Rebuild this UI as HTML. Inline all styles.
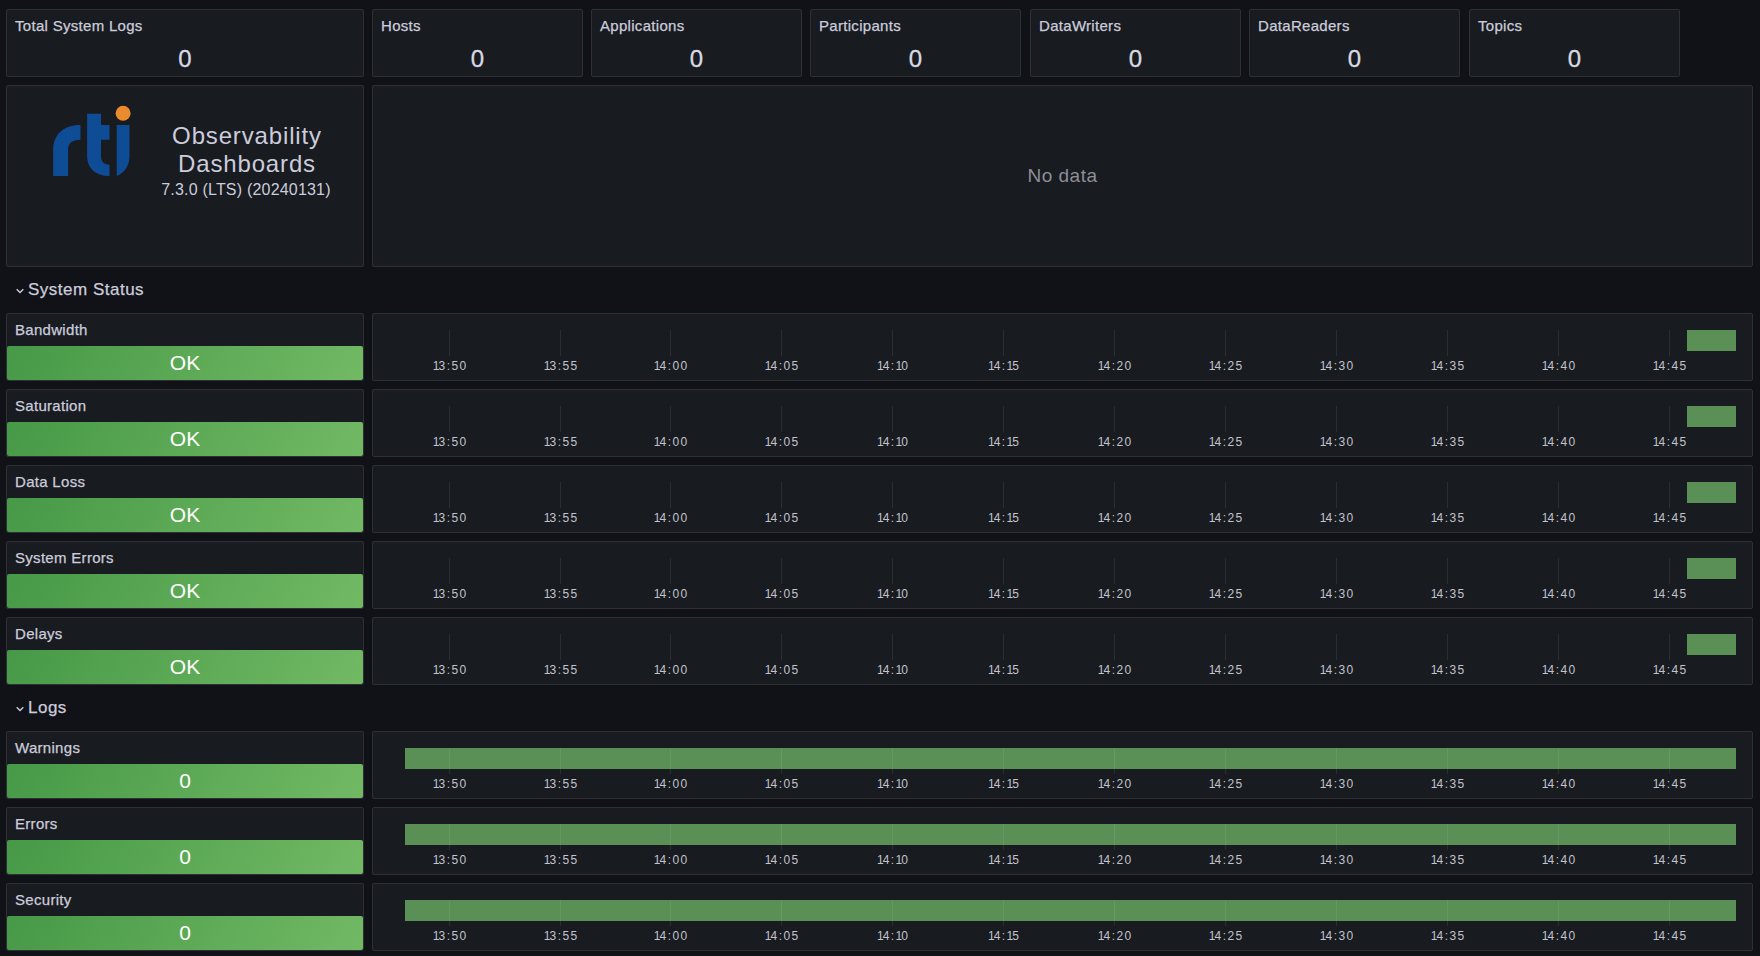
<!DOCTYPE html><html><head><meta charset="utf-8"><title>Dashboard</title><style>
*{margin:0;padding:0;box-sizing:border-box}
html,body{width:1760px;height:956px;overflow:hidden;background:#111217;font-family:"Liberation Sans",sans-serif;color:#ccccdc}
.p{position:absolute;background:#181b1f;border:1px solid #2e3036;border-radius:2px;height:68px}
.t{position:absolute;left:8px;top:8px;font-size:15px;line-height:16px;letter-spacing:0.3px;white-space:nowrap;color:#ccccdc;-webkit-text-stroke:0.25px #ccccdc}
.v{position:absolute;left:0;right:0;top:35px;text-align:center;font-size:24px;line-height:28px;color:#d8d9e3;-webkit-text-stroke:0.3px #d8d9e3}
.g{position:absolute;left:0;right:0;bottom:0;height:34px;border-radius:2px;background:linear-gradient(120deg,#469947,#72b964);color:#fff;text-align:center;font-size:21px;line-height:34px}
.rh{position:absolute;left:6px;height:30px;width:1747px}
.rh .c{position:absolute;left:10px;top:13px}
.rh .n{position:absolute;left:22px;top:6px;font-size:17px;line-height:18px;letter-spacing:0.5px;color:#ccccdc;-webkit-text-stroke:0.25px #ccccdc}
.bar{position:absolute;background:#5a9056}
.tk{position:absolute;width:1px;height:26px;top:16px;background:rgba(204,204,220,0.10)}
.lb{position:absolute;top:45px;width:60px;margin-left:-30px;text-align:center;font-size:12px;line-height:14px;letter-spacing:1.4px;color:#c3c3cd}
.lb i{font-style:normal;letter-spacing:-0.9px}
</style></head><body>
<div class="p" style="left:6px;top:9px;width:358px"><div class="t">Total System Logs</div><div class="v">0</div></div>
<div class="p" style="left:372px;top:9px;width:211px"><div class="t">Hosts</div><div class="v">0</div></div>
<div class="p" style="left:591px;top:9px;width:211px"><div class="t">Applications</div><div class="v">0</div></div>
<div class="p" style="left:810px;top:9px;width:211px"><div class="t">Participants</div><div class="v">0</div></div>
<div class="p" style="left:1030px;top:9px;width:211px"><div class="t">DataWriters</div><div class="v">0</div></div>
<div class="p" style="left:1249px;top:9px;width:211px"><div class="t">DataReaders</div><div class="v">0</div></div>
<div class="p" style="left:1469px;top:9px;width:211px"><div class="t">Topics</div><div class="v">0</div></div>
<div class="p" style="left:6px;top:85px;width:358px;height:182px">
<svg style="position:absolute;left:-1px;top:-1px" width="358" height="182" viewBox="6 85 358 182"><path fill="#0f4c96" d="M53.2,176 L53.2,150 C53.2,135 63,125 80.5,125 L80.5,139.7 C72,139.7 68.1,143 68.1,150 L68.1,176 Z"/><path fill="#0f4c96" d="M87.1,113.8 L101,113.8 L101,125.1 L109.5,125.1 L109.5,139.7 L101,139.7 L101,156 C101,161.5 104,164.7 109.5,164.7 L109.5,176 C95,176 87.1,168 87.1,156 Z"/><path fill="#0f4c96" d="M116.7,125.1 L129.5,125.1 L129.5,156 C129.5,166 124,173 116.7,176 Z"/><circle fill="#ea8b2d" cx="123.1" cy="113.2" r="7.5"/></svg>
<div style="position:absolute;left:140px;width:200px;top:36px;text-align:center;font-size:24px;line-height:28px;letter-spacing:0.85px;color:#ccccdc">Observability<br>Dashboards</div>
<div style="position:absolute;left:139px;width:200px;top:95px;text-align:center;font-size:16px;line-height:18px;letter-spacing:0.2px;color:#ccccdc">7.3.0 (LTS) (20240131)</div>
</div>
<div class="p" style="left:372px;top:85px;width:1381px;height:182px"><div style="position:absolute;left:0;right:0;top:79px;text-align:center;font-size:19px;line-height:22px;letter-spacing:0.5px;color:#8e8e99">No data</div></div>
<div class="rh" style="top:275px"><svg class="c" width="10" height="7" viewBox="0 0 10 7"><path d="M0.7,1.3 L4,4.6 L7.3,1.3" fill="none" stroke="#ccccdc" stroke-width="1.4"/></svg><div class="n">System Status</div></div>
<div class="p" style="left:6px;top:313px;width:358px"><div class="t">Bandwidth</div><div class="g">OK</div></div>
<div class="p" style="left:372px;top:313px;width:1381px">
<div class="bar" style="left:1314px;top:16px;width:49px;height:21px"></div>
<div class="tk" style="left:76px"></div><div class="lb" style="left:77.2px"><i>1</i>3:50</div>
<div class="tk" style="left:187px"></div><div class="lb" style="left:188.2px"><i>1</i>3:55</div>
<div class="tk" style="left:297px"></div><div class="lb" style="left:298.2px"><i>1</i>4:00</div>
<div class="tk" style="left:408px"></div><div class="lb" style="left:409.2px"><i>1</i>4:05</div>
<div class="tk" style="left:519px"></div><div class="lb" style="left:520.2px"><i>1</i>4:<i>1</i>0</div>
<div class="tk" style="left:630px"></div><div class="lb" style="left:631.2px"><i>1</i>4:<i>1</i>5</div>
<div class="tk" style="left:741px"></div><div class="lb" style="left:742.2px"><i>1</i>4:20</div>
<div class="tk" style="left:852px"></div><div class="lb" style="left:853.2px"><i>1</i>4:25</div>
<div class="tk" style="left:963px"></div><div class="lb" style="left:964.2px"><i>1</i>4:30</div>
<div class="tk" style="left:1074px"></div><div class="lb" style="left:1075.2px"><i>1</i>4:35</div>
<div class="tk" style="left:1185px"></div><div class="lb" style="left:1186.2px"><i>1</i>4:40</div>
<div class="tk" style="left:1296px"></div><div class="lb" style="left:1297.2px"><i>1</i>4:45</div>
</div>
<div class="p" style="left:6px;top:389px;width:358px"><div class="t">Saturation</div><div class="g">OK</div></div>
<div class="p" style="left:372px;top:389px;width:1381px">
<div class="bar" style="left:1314px;top:16px;width:49px;height:21px"></div>
<div class="tk" style="left:76px"></div><div class="lb" style="left:77.2px"><i>1</i>3:50</div>
<div class="tk" style="left:187px"></div><div class="lb" style="left:188.2px"><i>1</i>3:55</div>
<div class="tk" style="left:297px"></div><div class="lb" style="left:298.2px"><i>1</i>4:00</div>
<div class="tk" style="left:408px"></div><div class="lb" style="left:409.2px"><i>1</i>4:05</div>
<div class="tk" style="left:519px"></div><div class="lb" style="left:520.2px"><i>1</i>4:<i>1</i>0</div>
<div class="tk" style="left:630px"></div><div class="lb" style="left:631.2px"><i>1</i>4:<i>1</i>5</div>
<div class="tk" style="left:741px"></div><div class="lb" style="left:742.2px"><i>1</i>4:20</div>
<div class="tk" style="left:852px"></div><div class="lb" style="left:853.2px"><i>1</i>4:25</div>
<div class="tk" style="left:963px"></div><div class="lb" style="left:964.2px"><i>1</i>4:30</div>
<div class="tk" style="left:1074px"></div><div class="lb" style="left:1075.2px"><i>1</i>4:35</div>
<div class="tk" style="left:1185px"></div><div class="lb" style="left:1186.2px"><i>1</i>4:40</div>
<div class="tk" style="left:1296px"></div><div class="lb" style="left:1297.2px"><i>1</i>4:45</div>
</div>
<div class="p" style="left:6px;top:465px;width:358px"><div class="t">Data Loss</div><div class="g">OK</div></div>
<div class="p" style="left:372px;top:465px;width:1381px">
<div class="bar" style="left:1314px;top:16px;width:49px;height:21px"></div>
<div class="tk" style="left:76px"></div><div class="lb" style="left:77.2px"><i>1</i>3:50</div>
<div class="tk" style="left:187px"></div><div class="lb" style="left:188.2px"><i>1</i>3:55</div>
<div class="tk" style="left:297px"></div><div class="lb" style="left:298.2px"><i>1</i>4:00</div>
<div class="tk" style="left:408px"></div><div class="lb" style="left:409.2px"><i>1</i>4:05</div>
<div class="tk" style="left:519px"></div><div class="lb" style="left:520.2px"><i>1</i>4:<i>1</i>0</div>
<div class="tk" style="left:630px"></div><div class="lb" style="left:631.2px"><i>1</i>4:<i>1</i>5</div>
<div class="tk" style="left:741px"></div><div class="lb" style="left:742.2px"><i>1</i>4:20</div>
<div class="tk" style="left:852px"></div><div class="lb" style="left:853.2px"><i>1</i>4:25</div>
<div class="tk" style="left:963px"></div><div class="lb" style="left:964.2px"><i>1</i>4:30</div>
<div class="tk" style="left:1074px"></div><div class="lb" style="left:1075.2px"><i>1</i>4:35</div>
<div class="tk" style="left:1185px"></div><div class="lb" style="left:1186.2px"><i>1</i>4:40</div>
<div class="tk" style="left:1296px"></div><div class="lb" style="left:1297.2px"><i>1</i>4:45</div>
</div>
<div class="p" style="left:6px;top:541px;width:358px"><div class="t">System Errors</div><div class="g">OK</div></div>
<div class="p" style="left:372px;top:541px;width:1381px">
<div class="bar" style="left:1314px;top:16px;width:49px;height:21px"></div>
<div class="tk" style="left:76px"></div><div class="lb" style="left:77.2px"><i>1</i>3:50</div>
<div class="tk" style="left:187px"></div><div class="lb" style="left:188.2px"><i>1</i>3:55</div>
<div class="tk" style="left:297px"></div><div class="lb" style="left:298.2px"><i>1</i>4:00</div>
<div class="tk" style="left:408px"></div><div class="lb" style="left:409.2px"><i>1</i>4:05</div>
<div class="tk" style="left:519px"></div><div class="lb" style="left:520.2px"><i>1</i>4:<i>1</i>0</div>
<div class="tk" style="left:630px"></div><div class="lb" style="left:631.2px"><i>1</i>4:<i>1</i>5</div>
<div class="tk" style="left:741px"></div><div class="lb" style="left:742.2px"><i>1</i>4:20</div>
<div class="tk" style="left:852px"></div><div class="lb" style="left:853.2px"><i>1</i>4:25</div>
<div class="tk" style="left:963px"></div><div class="lb" style="left:964.2px"><i>1</i>4:30</div>
<div class="tk" style="left:1074px"></div><div class="lb" style="left:1075.2px"><i>1</i>4:35</div>
<div class="tk" style="left:1185px"></div><div class="lb" style="left:1186.2px"><i>1</i>4:40</div>
<div class="tk" style="left:1296px"></div><div class="lb" style="left:1297.2px"><i>1</i>4:45</div>
</div>
<div class="p" style="left:6px;top:617px;width:358px"><div class="t">Delays</div><div class="g">OK</div></div>
<div class="p" style="left:372px;top:617px;width:1381px">
<div class="bar" style="left:1314px;top:16px;width:49px;height:21px"></div>
<div class="tk" style="left:76px"></div><div class="lb" style="left:77.2px"><i>1</i>3:50</div>
<div class="tk" style="left:187px"></div><div class="lb" style="left:188.2px"><i>1</i>3:55</div>
<div class="tk" style="left:297px"></div><div class="lb" style="left:298.2px"><i>1</i>4:00</div>
<div class="tk" style="left:408px"></div><div class="lb" style="left:409.2px"><i>1</i>4:05</div>
<div class="tk" style="left:519px"></div><div class="lb" style="left:520.2px"><i>1</i>4:<i>1</i>0</div>
<div class="tk" style="left:630px"></div><div class="lb" style="left:631.2px"><i>1</i>4:<i>1</i>5</div>
<div class="tk" style="left:741px"></div><div class="lb" style="left:742.2px"><i>1</i>4:20</div>
<div class="tk" style="left:852px"></div><div class="lb" style="left:853.2px"><i>1</i>4:25</div>
<div class="tk" style="left:963px"></div><div class="lb" style="left:964.2px"><i>1</i>4:30</div>
<div class="tk" style="left:1074px"></div><div class="lb" style="left:1075.2px"><i>1</i>4:35</div>
<div class="tk" style="left:1185px"></div><div class="lb" style="left:1186.2px"><i>1</i>4:40</div>
<div class="tk" style="left:1296px"></div><div class="lb" style="left:1297.2px"><i>1</i>4:45</div>
</div>
<div class="rh" style="top:693px"><svg class="c" width="10" height="7" viewBox="0 0 10 7"><path d="M0.7,1.3 L4,4.6 L7.3,1.3" fill="none" stroke="#ccccdc" stroke-width="1.4"/></svg><div class="n">Logs</div></div>
<div class="p" style="left:6px;top:731px;width:358px"><div class="t">Warnings</div><div class="g">0</div></div>
<div class="p" style="left:372px;top:731px;width:1381px">
<div class="bar" style="left:32px;top:16px;width:1331px;height:21px"></div>
<div class="tk" style="left:76px"></div><div class="lb" style="left:77.2px"><i>1</i>3:50</div>
<div class="tk" style="left:187px"></div><div class="lb" style="left:188.2px"><i>1</i>3:55</div>
<div class="tk" style="left:297px"></div><div class="lb" style="left:298.2px"><i>1</i>4:00</div>
<div class="tk" style="left:408px"></div><div class="lb" style="left:409.2px"><i>1</i>4:05</div>
<div class="tk" style="left:519px"></div><div class="lb" style="left:520.2px"><i>1</i>4:<i>1</i>0</div>
<div class="tk" style="left:630px"></div><div class="lb" style="left:631.2px"><i>1</i>4:<i>1</i>5</div>
<div class="tk" style="left:741px"></div><div class="lb" style="left:742.2px"><i>1</i>4:20</div>
<div class="tk" style="left:852px"></div><div class="lb" style="left:853.2px"><i>1</i>4:25</div>
<div class="tk" style="left:963px"></div><div class="lb" style="left:964.2px"><i>1</i>4:30</div>
<div class="tk" style="left:1074px"></div><div class="lb" style="left:1075.2px"><i>1</i>4:35</div>
<div class="tk" style="left:1185px"></div><div class="lb" style="left:1186.2px"><i>1</i>4:40</div>
<div class="tk" style="left:1296px"></div><div class="lb" style="left:1297.2px"><i>1</i>4:45</div>
</div>
<div class="p" style="left:6px;top:807px;width:358px"><div class="t">Errors</div><div class="g">0</div></div>
<div class="p" style="left:372px;top:807px;width:1381px">
<div class="bar" style="left:32px;top:16px;width:1331px;height:21px"></div>
<div class="tk" style="left:76px"></div><div class="lb" style="left:77.2px"><i>1</i>3:50</div>
<div class="tk" style="left:187px"></div><div class="lb" style="left:188.2px"><i>1</i>3:55</div>
<div class="tk" style="left:297px"></div><div class="lb" style="left:298.2px"><i>1</i>4:00</div>
<div class="tk" style="left:408px"></div><div class="lb" style="left:409.2px"><i>1</i>4:05</div>
<div class="tk" style="left:519px"></div><div class="lb" style="left:520.2px"><i>1</i>4:<i>1</i>0</div>
<div class="tk" style="left:630px"></div><div class="lb" style="left:631.2px"><i>1</i>4:<i>1</i>5</div>
<div class="tk" style="left:741px"></div><div class="lb" style="left:742.2px"><i>1</i>4:20</div>
<div class="tk" style="left:852px"></div><div class="lb" style="left:853.2px"><i>1</i>4:25</div>
<div class="tk" style="left:963px"></div><div class="lb" style="left:964.2px"><i>1</i>4:30</div>
<div class="tk" style="left:1074px"></div><div class="lb" style="left:1075.2px"><i>1</i>4:35</div>
<div class="tk" style="left:1185px"></div><div class="lb" style="left:1186.2px"><i>1</i>4:40</div>
<div class="tk" style="left:1296px"></div><div class="lb" style="left:1297.2px"><i>1</i>4:45</div>
</div>
<div class="p" style="left:6px;top:883px;width:358px"><div class="t">Security</div><div class="g">0</div></div>
<div class="p" style="left:372px;top:883px;width:1381px">
<div class="bar" style="left:32px;top:16px;width:1331px;height:21px"></div>
<div class="tk" style="left:76px"></div><div class="lb" style="left:77.2px"><i>1</i>3:50</div>
<div class="tk" style="left:187px"></div><div class="lb" style="left:188.2px"><i>1</i>3:55</div>
<div class="tk" style="left:297px"></div><div class="lb" style="left:298.2px"><i>1</i>4:00</div>
<div class="tk" style="left:408px"></div><div class="lb" style="left:409.2px"><i>1</i>4:05</div>
<div class="tk" style="left:519px"></div><div class="lb" style="left:520.2px"><i>1</i>4:<i>1</i>0</div>
<div class="tk" style="left:630px"></div><div class="lb" style="left:631.2px"><i>1</i>4:<i>1</i>5</div>
<div class="tk" style="left:741px"></div><div class="lb" style="left:742.2px"><i>1</i>4:20</div>
<div class="tk" style="left:852px"></div><div class="lb" style="left:853.2px"><i>1</i>4:25</div>
<div class="tk" style="left:963px"></div><div class="lb" style="left:964.2px"><i>1</i>4:30</div>
<div class="tk" style="left:1074px"></div><div class="lb" style="left:1075.2px"><i>1</i>4:35</div>
<div class="tk" style="left:1185px"></div><div class="lb" style="left:1186.2px"><i>1</i>4:40</div>
<div class="tk" style="left:1296px"></div><div class="lb" style="left:1297.2px"><i>1</i>4:45</div>
</div>
</body></html>
